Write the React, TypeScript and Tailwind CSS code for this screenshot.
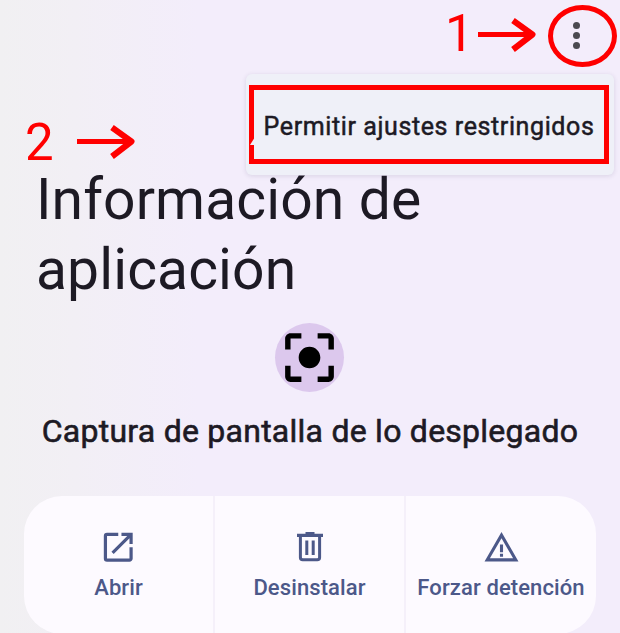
import React from "react";
import { MdCenterFocusStrong, MdOpenInNew, MdWarningAmber } from "react-icons/md";

function TrashIcon() {
  return (
    <svg viewBox="0 0 26 30" className="h-[30px] w-[26px]" fill="none" stroke="currentColor">
      <path d="M0 3.3H26M8.5 1.6H17.5" strokeWidth="3.2" />
      <path d="M3.4 4V25.5Q3.4 27.8 5.7 27.8H20.3Q22.6 27.8 22.6 25.5V4" strokeWidth="3" />
      <path d="M9.8 8.5V23M16.2 8.5V23" strokeWidth="3" />
    </svg>
  );
}

function Arrow() {
  return (
    <svg viewBox="0 0 60 36" className="h-9 w-[60px]" fill="none" stroke="#ff0000">
      <path d="M1 17.5H55" strokeWidth="5" />
      <path d="M36 3.5L55.5 17.5L36 32.5" strokeWidth="6" strokeLinejoin="round" />
    </svg>
  );
}

function Action({ label, children }: { label: string; children: React.ReactNode }) {
  return (
    <button className="flex h-full flex-col items-center pt-[31px] text-[#4c5889]">
      <span className="flex h-[40px] items-center justify-center">{children}</span>
      <span className="mt-[7px] whitespace-nowrap text-[22px] font-medium leading-7 tracking-[0.1px]">{label}</span>
    </button>
  );
}

export default function App() {
  return (
    <div className="relative flex h-[633px] w-[620px] flex-col overflow-hidden bg-[linear-gradient(90deg,#f1f0f2_0%,#f2eff5_12%,#f3edfb_32%,#f3edfb_100%)] font-['Roboto',sans-serif] text-[#1d1a24]">
      <header className="flex h-[165px] shrink-0 justify-end pr-[40px] pt-[22px]">
        <button className="flex h-[27px] w-[7px] flex-col justify-between text-[#4b4a50]">
          <span className="size-[7px] rounded-full bg-current" />
          <span className="size-[7px] rounded-full bg-current" />
          <span className="size-[7px] rounded-full bg-current" />
        </button>
      </header>
      <h1 className="h-[140px] shrink-0 pl-[36px] text-[57px] leading-[70px] tracking-[0.1px]">
        Información de
        <br />
        aplicación
      </h1>
      <div className="ml-[275px] mt-[18px] flex size-[69px] shrink-0 items-center justify-center rounded-full bg-[#dcc8ed]">
        <MdCenterFocusStrong className="size-[65px] shrink-0 text-black" />
      </div>
      <h2 className="mt-[19px] h-10 shrink-0 whitespace-nowrap text-center text-[32px] font-normal leading-10 tracking-[0.25px] [-webkit-text-stroke:0.6px_#1d1a24]">
        Captura de pantalla de lo desplegado
      </h2>
      <section className="mx-6 mt-[45px] grid h-[138px] shrink-0 grid-cols-[191px_191px_190px] divide-x-2 divide-[#f5f0fa] rounded-[38px] bg-[#fdfaff]">
        <Action label="Abrir">
          <MdOpenInNew className="size-[38.5px]" />
        </Action>
        <Action label="Desinstalar">
          <TrashIcon />
        </Action>
        <Action label="Forzar detención">
          <MdWarningAmber className="size-[37px]" />
        </Action>
      </section>

      <div className="absolute left-[246px] top-[74px] flex h-[101px] w-[368px] rounded-md bg-[#eff0f8] pl-[3px] pt-[11px] shadow-[0_1px_5px_rgba(60,50,90,0.14)]">
        <div className="flex h-[79px] w-[360px] items-center justify-center whitespace-nowrap border-5 border-[#ff0000] pt-[4px] text-[25px] font-normal tracking-[0.6px] [-webkit-text-stroke:0.5px_#1d1a24]">
          Permitir ajustes restringidos
        </div>
        <svg viewBox="0 0 5 8" className="absolute left-[4px] top-[63px] h-2 w-[5px]" fill="#eff0f8">
          <path d="M5 0V8H0Z" />
        </svg>
      </div>

      <div className="absolute left-[445px] top-[6px] text-[51px] leading-[56px] text-[#ff0000]">1</div>
      <div className="absolute left-[477px] top-[17px]"><Arrow /></div>
      <div className="absolute left-[548px] top-[5px] h-[62px] w-[69px] rounded-[50%] border-5 border-[#ff0000]" />
      <div className="absolute left-[25px] top-[115px] text-[51px] leading-[56px] text-[#ff0000]">2</div>
      <div className="absolute left-[76px] top-[124px]"><Arrow /></div>
    </div>
  );
}
